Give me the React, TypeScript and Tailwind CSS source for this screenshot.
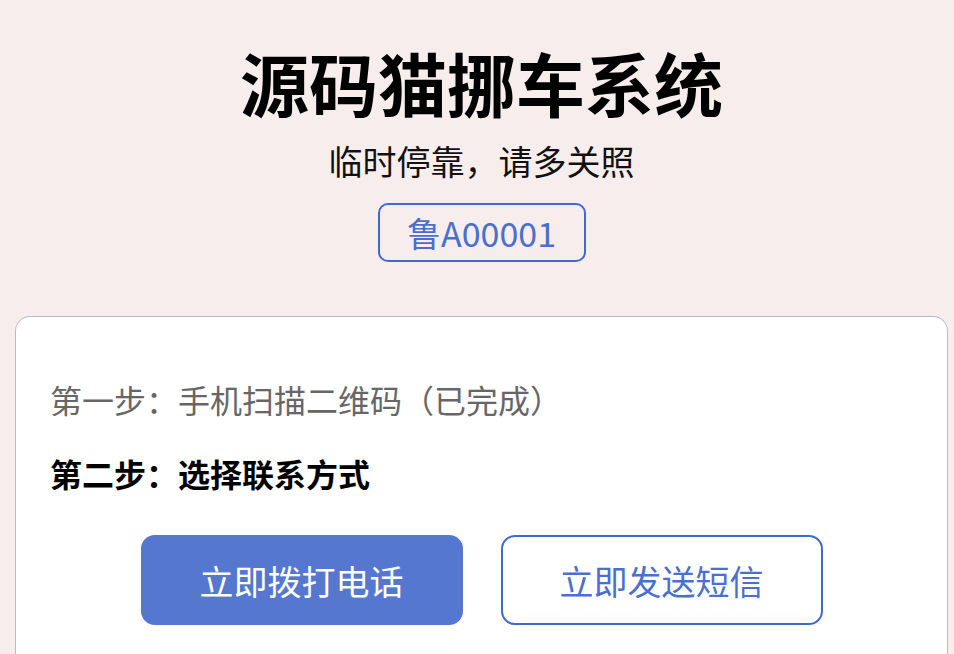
import React from "react";

export default function App() {
  return (
    <div
      className="w-[954px] h-[654px] overflow-hidden bg-[#f8eded] flex flex-col"
      style={{ fontFamily: '"Noto Sans CJK SC", "Noto Sans", sans-serif' }}
    >
      <div className="flex flex-col items-center pl-[9px]">
        <h1 className="mt-[36px] text-[69px] leading-[92px] font-bold text-black">源码猫挪车系统</h1>
        <p className="mt-[10px] text-[34px] leading-[46px] text-[#111]">临时停靠，请多关照</p>
        <div className="mt-[19px] w-[208px] h-[59px] flex items-center justify-center rounded-[10px] border-2 border-[#4069cf] text-[#4a6fcf] text-[34px]">
          鲁A00001
        </div>
      </div>
      <div className="mt-[54px] ml-[15px] w-[933px] flex-1 bg-white rounded-t-[15px] border-[1.5px] border-b-0 border-[#bcbcbc] px-[34px] pt-[58px]">
        <p className="text-[32px] leading-[48px] text-[#666]">第一步：手机扫描二维码（已完成）</p>
        <p className="mt-[26px] text-[32px] leading-[48px] font-bold text-black">第二步：选择联系方式</p>
        <div className="mt-[38px] flex justify-center gap-[38px]">
          <button className="w-[322px] h-[90px] rounded-[14px] bg-[#5577cf] text-white text-[34px]">立即拨打电话</button>
          <button className="w-[322px] h-[90px] rounded-[14px] border-2 border-[#4069cf] bg-white text-[#4a6fcf] text-[34px]">立即发送短信</button>
        </div>
      </div>
    </div>
  );
}
